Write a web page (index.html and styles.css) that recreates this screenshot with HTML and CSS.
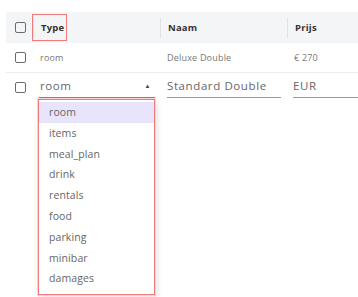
FILE: index.html
```html
<!DOCTYPE html>
<html lang="nl">
<head>
    <meta charset="UTF-8">
    <title>Producten</title>
    <link rel="stylesheet" href="styles.css">
</head>
<body>
    <div class="table">
        <!-- header -->
        <div class="row head">
            <div class="cell check"><span class="box"></span></div>
            <div class="cell col type-head">Type<span class="mark"></span></div>
            <div class="cell col">Naam</div>
            <div class="cell col">Prijs</div>
        </div>

        <div class="row">
            <div class="cell check"><span class="box"></span></div>
            <div class="cell">room</div>
            <div class="cell">Deluxe Double</div>
            <div class="cell">€ 270</div>
        </div>

        <!-- row being edited -->
        <div class="row edit">
            <div class="cell check"><span class="box"></span></div>
            <div class="cell">
                <div class="field active">room <span class="caret">▲</span></div>
            </div>
            <div class="cell"><div class="field name">Standard Double</div></div>
            <div class="cell"><div class="field price">EUR</div></div>
        </div>

        <!-- open select list -->
        <ul class="menu">
            <li class="option selected">room</li>
            <li class="option">items</li>
            <li class="option">meal_plan</li>
            <li class="option">drink</li>
            <li class="option">rentals</li>
            <li class="option">food</li>
            <li class="option">parking</li>
            <li class="option">minibar</li>
            <li class="option">damages</li>
        </ul>
    </div>
</body>
</html>
```

FILE: styles.css
```css
html, body {
    height: 100%;
}
body {
    margin: 0;
    min-height: 297px;
    background: #fff;
    font-family: "Open Sans", "Liberation Sans", sans-serif;
    color: #777;
}
.table {
    padding: 12px 0 0 6px;
    min-height: 285px;
    position: relative;
}
.row {
    display: grid;
    grid-template-columns: 27px 127px 127px 1fr;
    height: 29px;
    align-items: center;
    border-bottom: 1px solid #ececee;
    font-size: 9px;
    letter-spacing: 0.2px;
}
.row.head {
    height: 31px;
    background: #f4f5f7;
    border-bottom: none;
    color: #333;
    font-weight: 700;
    font-size: 9.5px;
}
.row.edit {
    border-bottom: none;
    height: 30px;
    align-items: start;
}
.cell {
    padding-left: 7px;
    position: relative;
}
.check {
    padding-left: 9px;
    display: flex;
}
.row.edit .check {
    padding-top: 9px;
}
.box {
    width: 9px;
    height: 9px;
    border: 1.5px solid #6b6b6b;
    border-radius: 2px;
}
.col {
    border-left: 1px solid #e2e3e6;
    line-height: 20px;
}
.mark {
    position: absolute;
    left: -2px;
    top: -4px;
    width: 33px;
    height: 25px;
    border: 1px solid #f07a7a;
}
.field {
    font-size: 11.5px;
    letter-spacing: 0.6px;
    color: #666;
    height: 21px;
    line-height: 20px;
    margin-top: 3px;
    border-bottom: 1px solid #9a9a9a;
    margin-right: 6px;
    position: relative;
}
.field.active {
    border-bottom: 1px solid #8c6ff0;
    margin-right: 5px;
    margin-left: -1px;
    padding-left: 1px;
}
.field.price {
    margin-left: -1px;
    margin-right: -10px;
}
.caret {
    position: absolute;
    right: 4px;
    top: 0;
    font-size: 6px;
    color: #444;
}
.menu {
    position: absolute;
    left: 38px;
    top: 99px;
    width: 115px;
    margin: 0;
    padding: 2px 0 5px;
    list-style: none;
    background: #fff;
    border: 1px solid #f07a7a;
    box-shadow: 0 0 0 1px #fbd3d3, 2px 3px 6px rgba(0, 0, 0, 0.12);
}
.option {
    height: 20.8px;
    line-height: 20px;
    padding-left: 10px;
    font-size: 10.5px;
    letter-spacing: 0.1px;
    color: #666;
}
.option.selected {
    background: #e8e4fb;
}
```
